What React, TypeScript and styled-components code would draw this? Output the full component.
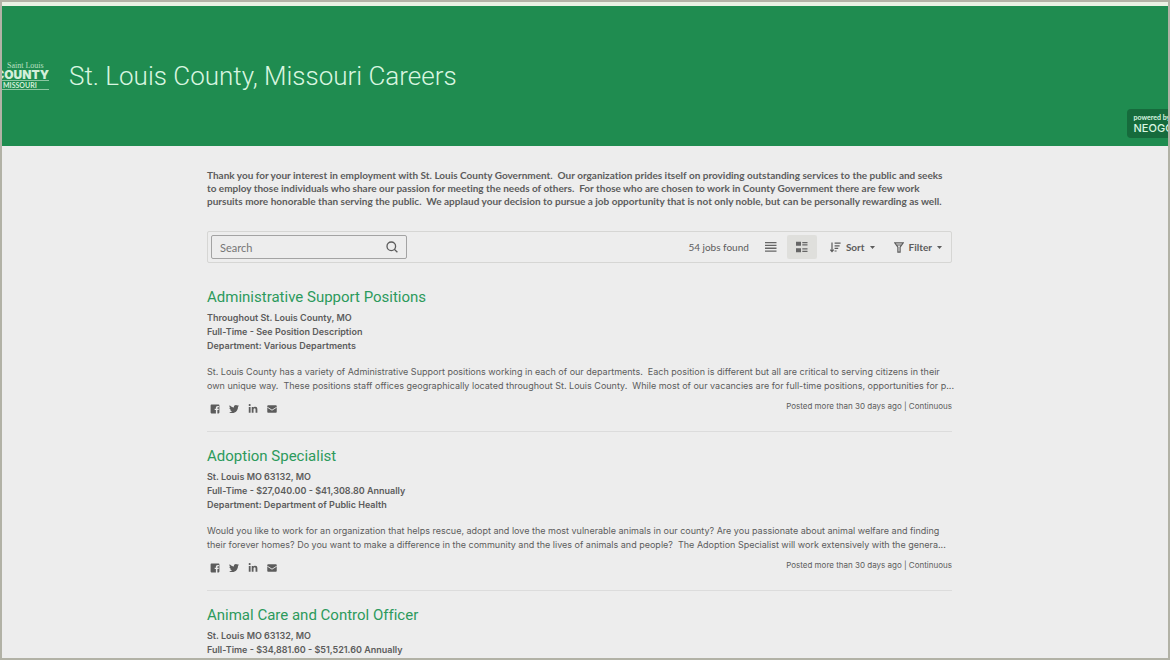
import React from "react";
import styled, { createGlobalStyle } from "styled-components";
import { FaTwitter, FaLinkedinIn } from "react-icons/fa";

const GlobalStyle = createGlobalStyle`
  *, *::before, *::after { box-sizing: border-box; }
  body {
    margin: 0;
    background: #ededed;
    color: #5c5c5c;
    font-family: Lato, "Liberation Sans", sans-serif;
    font-size: 10px;
    font-variant-ligatures: no-common-ligatures;
  }
  h1, h2, p, ul { margin: 0; padding: 0; }
  ul { list-style: none; }
  button, input { font: inherit; color: inherit; }
`;

const Frame = styled.div`
  height: 100vh;
  overflow: hidden;
  border: 2px solid #b2b2a6;
`;

const Header = styled.header`
  position: relative;
  display: flex;
  align-items: center;
  gap: 20px;
  height: 144px;
  overflow: hidden;
  border-top: 4px solid #e9f1e3;
  background: #1f8c50;
`;

const Logo = styled.svg`
  display: block;
  width: 47px;
  height: 32px;
`;

const SiteTitle = styled.h1`
  color: #d9f6e0;
  font-family: Roboto, sans-serif;
  font-size: 26px;
  font-weight: 300;
  line-height: 32px;
  white-space: nowrap;
`;

const PoweredBy = styled.a`
  position: absolute;
  right: -20px;
  bottom: 8px;
  padding: 4px 7px;
  border-radius: 4px;
  background: #166b3c;
  color: #d9f6e0;
  font-size: 7px;
  font-weight: 700;
  line-height: 9px;
  text-decoration: none;
`;

const Brand = styled.span`
  display: block;
  font-family: Inter, sans-serif;
  font-size: 11px;
  font-weight: 500;
  line-height: 12px;
`;

const Main = styled.main`
  padding: 23px 11px 0 0;
`;

const Column = styled.div`
  max-width: 745px;
  margin: 0 auto;
`;

const Intro = styled.p`
  font-weight: 700;
  line-height: 13px;
  white-space: pre-wrap;
`;

const Toolbar = styled.div`
  display: flex;
  align-items: center;
  height: 32px;
  margin-top: 23px;
  padding: 0 3px;
  border: 1px solid #d6d6d4;
  border-radius: 2px;
`;

const SearchBox = styled.form`
  display: flex;
  align-items: center;
  width: 196px;
  height: 24px;
  margin-right: auto;
  border: 1px solid #a3a3a3;
  border-radius: 2px;
`;

const SearchInput = styled.input`
  flex: 1;
  min-width: 0;
  padding: 0 8px;
  border: 0;
  outline: 0;
  background: transparent;
  font-size: 11px;
  &::placeholder { color: #757575; opacity: 1; }
`;

const IconButton = styled.button<{ $active?: boolean }>`
  display: flex;
  align-items: center;
  justify-content: center;
  width: 30px;
  height: 24px;
  padding: 0;
  border: 0;
  border-radius: 2px;
  background: ${(p) => (p.$active ? "#dfdfdc" : "transparent")};
`;

const SubmitButton = styled(IconButton)`
  width: 28px;
  height: 22px;
`;

const ViewSwitch = styled.div`
  display: flex;
  gap: 1px;
  margin-left: 7px;
`;

const JobCount = styled.span`
  font-size: 10px;
`;

const MenuButton = styled.button`
  display: flex;
  align-items: center;
  gap: 5px;
  height: 24px;
  margin-left: 13px;
  padding: 0 6px 0 0;
  border: 0;
  background: transparent;
  font-weight: 700;
`;

const Job = styled.li`
  padding-bottom: 16px;
  border-bottom: 1px solid #dcdcdc;
  margin-bottom: 14px;
`;

const JobList = styled.ul`
  margin-top: 24px;
`;

const JobTitle = styled.h2`
  font-family: Roboto, sans-serif;
  font-size: 15px;
  font-weight: 400;
  line-height: 20px;
`;

const JobLink = styled.a`
  color: #2c9a5c;
  text-decoration: none;
`;

const Facts = styled.ul`
  margin-top: 4px;
  font-family: Inter, sans-serif;
  font-size: 9px;
  font-weight: 600;
  line-height: 14px;
`;

const Summary = styled.p`
  margin-top: 12px;
  font-family: Inter, sans-serif;
  font-size: 9px;
  line-height: 14px;
  white-space: pre;
`;

const JobFooter = styled.div`
  display: flex;
  align-items: flex-start;
  justify-content: space-between;
  height: 14px;
  padding-left: 3px;
  margin-top: 8px;
`;

const Share = styled.div`
  display: flex;
  gap: 9px;
  padding-top: 3px;
`;

const ShareLink = styled.a`
  display: flex;
  width: 10px;
  color: #5c5c5c;
`;

const Posted = styled.span`
  font-family: Inter, sans-serif;
  font-size: 8px;
  line-height: 10px;
`;

const CountyLogo = () => (
  <Logo viewBox="0 0 47 32" role="img" aria-label="Saint Louis County Missouri">
    <g fill="#d3efd9">
      <text x="5" y="8" fontFamily="Liberation Serif, serif" fontSize="8" opacity="0.85">Saint Louis</text>
      <text x="47" y="19" textAnchor="end" fontFamily="Inter, sans-serif" fontWeight="900" fontSize="12">COUNTY</text>
      <rect x="0" y="20" width="47" height="1" opacity="0.6" />
      <text x="1" y="28" fontFamily="Lato, sans-serif" fontWeight="700" fontSize="7">MISSOURI</text>
      <rect x="0" y="29" width="47" height="1" opacity="0.6" />
    </g>
  </Logo>
);

const SearchIcon = () => (
  <svg width="12" height="12" viewBox="0 0 12 12" fill="none" stroke="#5c5c5c" strokeWidth="1.3">
    <circle cx="5.3" cy="5.3" r="4.3" />
    <path d="M8.3 8.3 11.4 11.2" />
  </svg>
);

const ListIcon = () => (
  <svg width="12" height="10" viewBox="0 0 12 10" fill="#666">
    <path d="M0 0h11.5v1.3H0zM0 2.8h11.5v1.3H0zM0 5.6h11.5v1.3H0zM0 8.4h11.5v1.3H0z" />
  </svg>
);

const DetailIcon = () => (
  <svg width="12" height="12" viewBox="0 0 12 12" fill="#666">
    <path d="M0 .7h5v4.1H0zM0 7.2h5v4.1H0zM6.3.9h5.2v1.3H6.3zM6.3 3.3h5.2v1.3H6.3zM6.3 7.3h5.2v1.3H6.3zM6.3 9.8h5.2v1.3H6.3z" />
  </svg>
);

const SortIcon = () => (
  <svg width="11" height="11" viewBox="0 0 11 11" fill="none" stroke="#5c5c5c" strokeWidth="1.2">
    <path d="M2 .5v9M.3 7.7 2 9.6l1.7-1.9M4.6 1.2h6M4.6 3.8h5M4.6 6.4h3.6M4.6 9h2" />
  </svg>
);

const FilterIcon = () => (
  <svg width="10" height="11" viewBox="0 0 10 11" fill="none" stroke="#5c5c5c" strokeWidth="1.2">
    <path d="M.8.9h8.4L6.1 5.2v4.9H3.9V5.2zM2.2 3h5.6" />
  </svg>
);

const FacebookIcon = () => (
  <svg width="10" height="10" viewBox="0 0 10 10" fill="#5c5c5c" fillRule="evenodd">
    <path d="M1.4.6h7.2a.8.8 0 0 1 .8.8v7.2a.8.8 0 0 1-.8.8H7.4V6.1h1.2l.2-1.4H7.4v-.8c0-.4.2-.7.7-.7h.8V1.9H7.7C6.5 1.9 5.9 2.6 5.9 3.7v1H4.7v1.4h1.2v3.3H1.4a.8.8 0 0 1-.8-.8V1.4a.8.8 0 0 1 .8-.8z" />
  </svg>
);

const TwitterIcon = () => <FaTwitter size={10} />;

const LinkedinIcon = () => <FaLinkedinIn size={10} />;

const EmailIcon = () => (
  <svg width="11" height="10" viewBox="0 0 11 10">
    <rect x="0.3" y="1" width="10.4" height="8.2" rx="0.9" fill="#5c5c5c" />
    <path d="M0.3 3 5.5 6.3 10.7 3" fill="none" stroke="#ededed" strokeWidth="1" />
  </svg>
);

const Caret = () => (
  <svg width="5" height="3" viewBox="0 0 5 3" fill="#5c5c5c">
    <path d="M0 0h5L2.5 3z" />
  </svg>
);

const jobs = [
  {
    title: "Administrative Support Positions",
    facts: ["Throughout St. Louis County, MO", "Full-Time - See Position Description", "Department: Various Departments"],
    summary: [
      "St. Louis County has a variety of Administrative Support positions working in each of our departments.  Each position is different but all are critical to serving citizens in their",
      "own unique way.  These positions staff offices geographically located throughout St. Louis County.  While most of our vacancies are for full-time positions, opportunities for p...",
    ],
  },
  {
    title: "Adoption Specialist",
    facts: ["St. Louis MO 63132, MO", "Full-Time - $27,040.00 - $41,308.80 Annually", "Department: Department of Public Health"],
    summary: [
      "Would you like to work for an organization that helps rescue, adopt and love the most vulnerable animals in our county? Are you passionate about animal welfare and finding",
      "their forever homes? Do you want to make a difference in the community and the lives of animals and people?  The Adoption Specialist will work extensively with the genera...",
    ],
  },
  {
    title: "Animal Care and Control Officer",
    facts: ["St. Louis MO 63132, MO", "Full-Time - $34,881.60 - $51,521.60 Annually"],
    summary: [],
  },
];

const intro = [
  "Thank you for your interest in employment with St. Louis County Government.  Our organization prides itself on providing outstanding services to the public and seeks",
  "to employ those individuals who share our passion for meeting the needs of others.  For those who are chosen to work in County Government there are few work",
  "pursuits more honorable than serving the public.  We applaud your decision to pursue a job opportunity that is not only noble, but can be personally rewarding as well.",
];

const networks = [
  { name: "Facebook", Icon: FacebookIcon },
  { name: "Twitter", Icon: TwitterIcon },
  { name: "LinkedIn", Icon: LinkedinIcon },
  { name: "Email", Icon: EmailIcon },
];

export default function App() {
  return (
    <>
      <GlobalStyle />
      <Frame>
        <Header>
          <CountyLogo />
          <SiteTitle>St. Louis County, Missouri Careers</SiteTitle>
          <PoweredBy href="#neogov">
            powered by
            <Brand>NEOGOV</Brand>
          </PoweredBy>
        </Header>
        <Main>
          <Column>
            <Intro>{intro.join("\n")}</Intro>
            <Toolbar>
              <SearchBox role="search">
                <SearchInput type="text" placeholder="Search" aria-label="Search" />
                <SubmitButton type="submit" aria-label="Submit search">
                  <SearchIcon />
                </SubmitButton>
              </SearchBox>
              <JobCount>54 jobs found</JobCount>
              <ViewSwitch>
                <IconButton type="button" aria-label="List view">
                  <ListIcon />
                </IconButton>
                <IconButton type="button" aria-label="Detail view" $active>
                  <DetailIcon />
                </IconButton>
              </ViewSwitch>
              <MenuButton type="button">
                <SortIcon />
                Sort
                <Caret />
              </MenuButton>
              <MenuButton type="button">
                <FilterIcon />
                Filter
                <Caret />
              </MenuButton>
            </Toolbar>
            <JobList>
              {jobs.map((job) => (
                <Job key={job.title}>
                  <JobTitle>
                    <JobLink href="#job">{job.title}</JobLink>
                  </JobTitle>
                  <Facts>
                    {job.facts.map((fact) => (
                      <li key={fact}>{fact}</li>
                    ))}
                  </Facts>
                  {job.summary.length > 0 && (
                    <>
                      <Summary>{job.summary.join("\n")}</Summary>
                      <JobFooter>
                        <Share>
                          {networks.map(({ name, Icon }) => (
                            <ShareLink key={name} href="#share" aria-label={`Share by ${name}`}>
                              <Icon />
                            </ShareLink>
                          ))}
                        </Share>
                        <Posted>Posted more than 30 days ago | Continuous</Posted>
                      </JobFooter>
                    </>
                  )}
                </Job>
              ))}
            </JobList>
          </Column>
        </Main>
      </Frame>
    </>
  );
}
